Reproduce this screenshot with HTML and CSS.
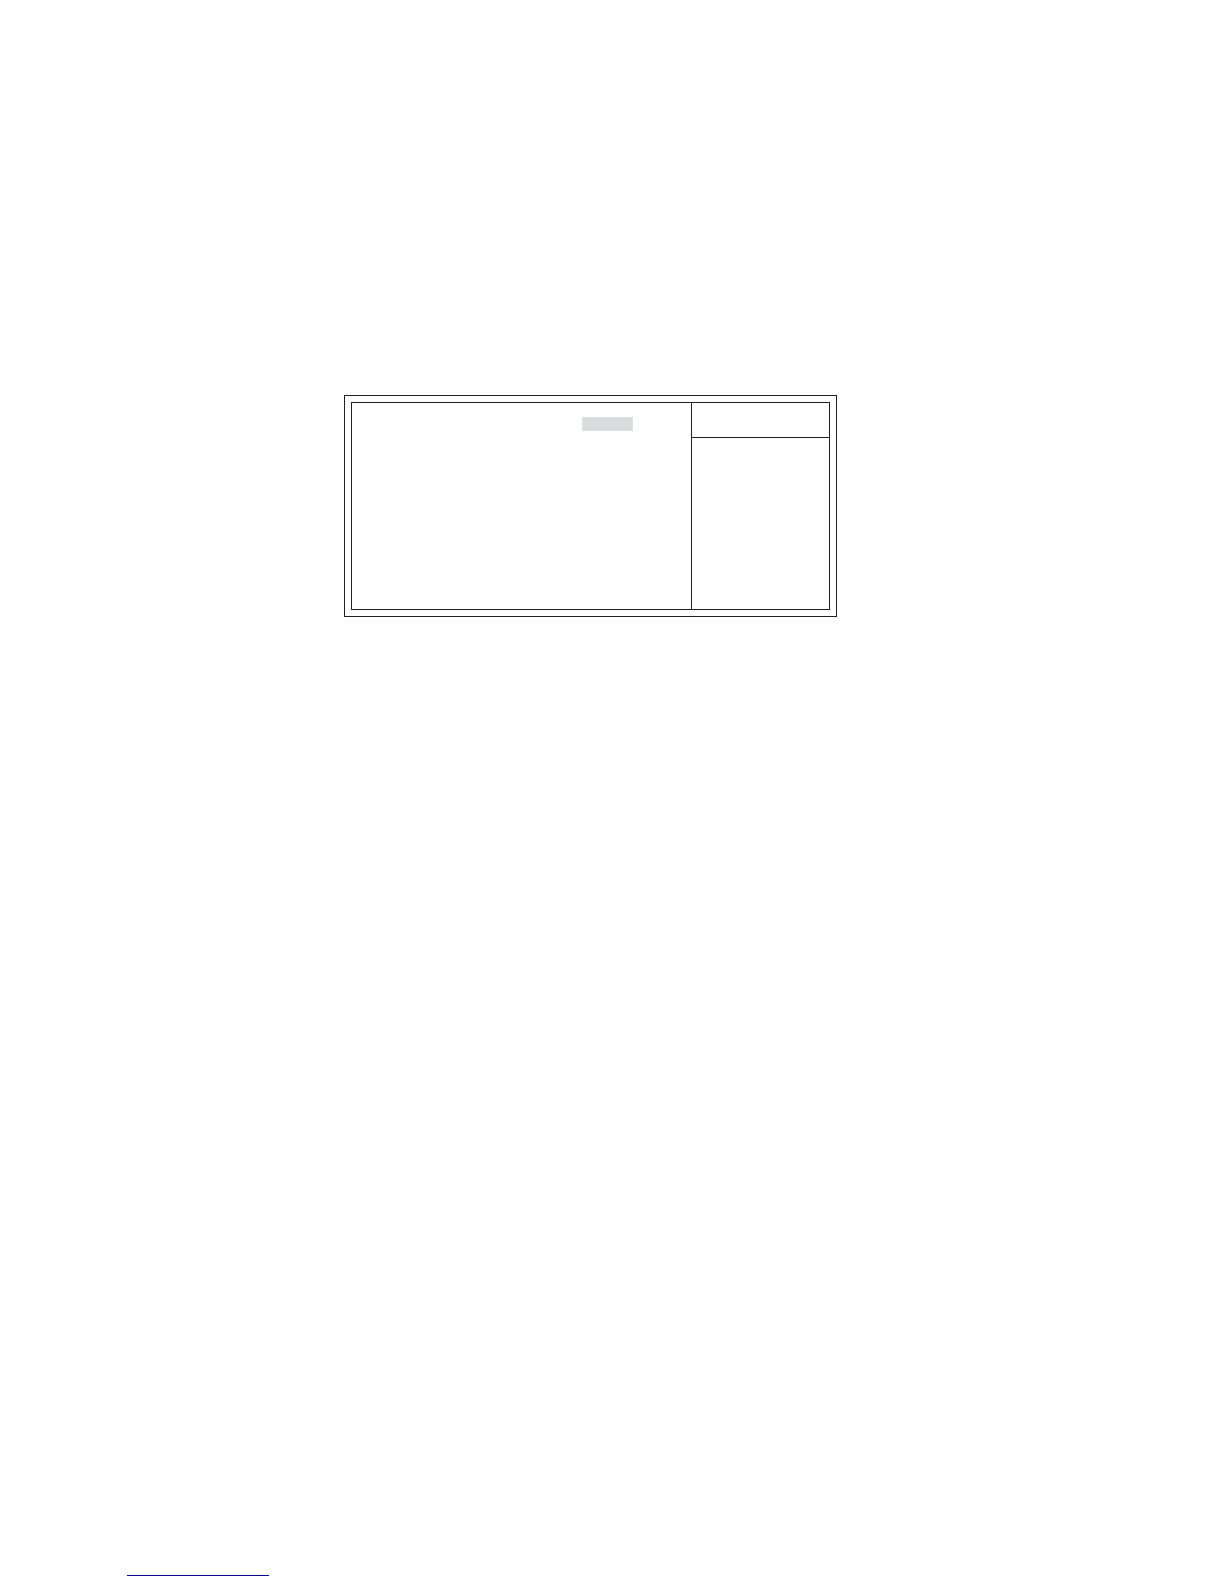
FILE: index.html
```
<!DOCTYPE html>
<html lang="en">
<head>
  <meta charset="UTF-8" />
  <meta name="viewport" content="width=device-width, initial-scale=1" />
  <link rel="stylesheet" href="styles.css">
</head>
<body>

  <!-- Setup screen frame -->
  <main class="page">
    <div class="screen">
      <div class="frame">
        <div class="options">
          <div class="selected"></div>
        </div>
        <div class="help">
          <div class="help-title"></div>
        </div>
      </div>
    </div>
  </main>

  <!-- Footer link -->
  <footer class="footer">
    <a href="#" class="footer-link"></a>
  </footer>

</body>
</html>
```

FILE: styles.css
```
* {
  margin: 0;
  padding: 0;
  box-sizing: border-box;
}

body {
  display: flex;
  flex-direction: column;
  min-height: 100vh;
  background-color: #fff;
  font-family: "Liberation Sans", Arial, sans-serif;
}

.page {
  flex: 1;
  padding: 395px 24px 24px 344px;
}

/* Double border */
.screen {
  max-width: 493px;
  padding: 6px;
  border: 1px solid #231f20;
}

.frame {
  display: grid;
  grid-template-columns: 1fr 138px;
  min-height: 208px;
  border: 1px solid #231f20;
}

.options {
  display: flex;
  justify-content: flex-end;
  align-items: flex-start;
  padding: 14px 58px 14px 14px;
}

.selected {
  width: 51px;
  height: 14px;
  background-color: #dcddde;
}

.help {
  border-left: 1px solid #231f20;
}

.help-title {
  height: 35px;
  border-bottom: 1px solid #231f20;
}

/* Footer */
.footer {
  padding: 0 24px 8px 127px;
}

.footer-link {
  display: block;
  max-width: 142px;
  border-bottom: 1px solid #080890;
}
```
